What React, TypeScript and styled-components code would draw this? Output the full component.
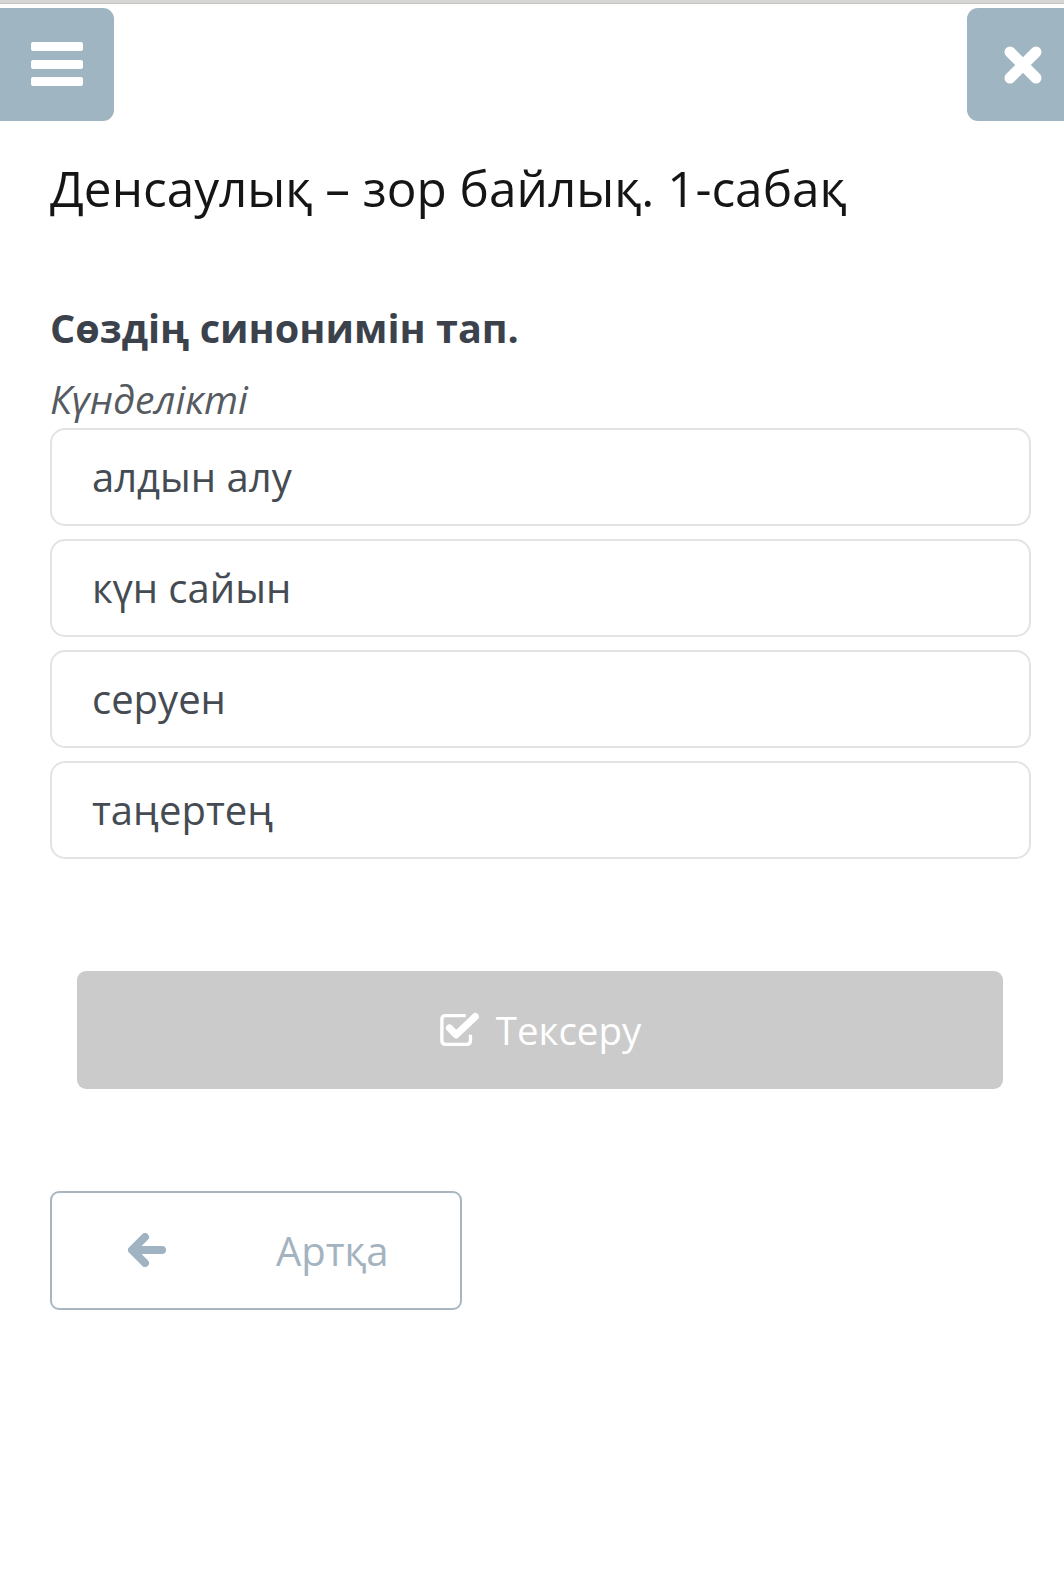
import React from "react";
import styled, { createGlobalStyle } from "styled-components";

const Global = createGlobalStyle`
  html, body { margin: 0; padding: 0; background: #ffffff; }
  body { font-family: "Open Sans", "Noto Sans", sans-serif; }
  * { box-sizing: border-box; }
`;

const Page = styled.div`
  width: 1064px;
  min-height: 1584px;
  background: #fff;
  border-top: 3px solid #d6d6d6;
  box-shadow: inset 0 1px 0 #c9c3bd;
`;

const TopBar = styled.div`
  display: flex;
  justify-content: space-between;
  padding-top: 5px;
`;

const SquareButton = styled.button<{ $side: "left" | "right"; $w: number; $shift?: number }>`
  width: ${(p) => p.$w}px;
  height: 113px;
  border: none;
  padding: 0 0 0 ${(p) => p.$shift ?? 0}px;
  background: #a0b5c2;
  display: flex;
  align-items: center;
  justify-content: center;
  border-radius: ${(p) => (p.$side === "left" ? "0 11px 11px 0" : "11px 0 0 11px")};
  cursor: pointer;
`;

const Content = styled.div`
  padding: 0 33px 0 50px;
  display: flex;
  flex-direction: column;
`;

const Title = styled.h1`
  margin: 38px 0 0 0;
  font-size: 49.5px;
  line-height: 1.2;
  font-weight: 400;
  color: #151515;
  white-space: nowrap;
`;

const Question = styled.h2`
  margin: 87px 0 0 0;
  font-size: 39.6px;
  line-height: 1.2;
  font-weight: 700;
  color: #3b424b;
`;

const Word = styled.div`
  margin-top: 23px;
  font-size: 39px;
  line-height: 1.2;
  font-style: italic;
  color: #555b61;
`;

const Options = styled.div`
  margin-top: 5px;
  display: flex;
  flex-direction: column;
  gap: 13px;
`;

const Option = styled.div`
  height: 98px;
  border: 2px solid #e3e3e3;
  border-radius: 15px;
  padding: 0 40px;
  display: flex;
  align-items: center;
  font-size: 40px;
  color: #454b52;
`;

const CheckRow = styled.div`
  margin-top: 112px;
  padding: 0 28px 0 27px;
`;

const CheckButton = styled.button`
  width: 100%;
  height: 118px;
  border: none;
  border-radius: 9px;
  background: #cbcbcb;
  color: #ffffff;
  font-family: "Open Sans", sans-serif;
  font-size: 38.5px;
  display: flex;
  align-items: center;
  justify-content: center;
  gap: 15px;
`;

const BackButton = styled.button`
  margin-top: 102px;
  width: 412px;
  height: 119px;
  border: 2px solid #a8b6c0;
  border-radius: 9px;
  background: #fff;
  color: #a3b3bf;
  font-family: "Open Sans", sans-serif;
  font-size: 40px;
  display: flex;
  align-items: center;
  padding: 0 0 0 76px;
  gap: 110px;
`;

const Bars = () => (
  <svg width="52" height="45" viewBox="0 0 52 45">
    <rect x="0" y="0" width="52" height="9" rx="2" fill="#fff" />
    <rect x="0" y="18" width="52" height="9" rx="2" fill="#fff" />
    <rect x="0" y="35" width="52" height="9" rx="2" fill="#fff" />
  </svg>
);

const Cross = () => (
  <svg width="38" height="38" viewBox="0 0 38 38">
    <path
      d="M6 6 L32 32 M32 6 L6 32"
      stroke="#fff"
      strokeWidth="11"
      strokeLinecap="round"
    />
  </svg>
);

const CheckIcon = () => (
  <svg width="42" height="36" viewBox="0 0 44 36">
    <path
      d="M28 3 H7 Q3 3 3 7 V29 Q3 33 7 33 H29 Q33 33 33 29 V23"
      fill="none"
      stroke="#fff"
      strokeWidth="3.5"
    />
    <path
      d="M11 16 L18 23 L38 4"
      fill="none"
      stroke="#fff"
      strokeWidth="7.5"
      strokeLinecap="round"
      strokeLinejoin="round"
    />
  </svg>
);

const ArrowLeft = () => (
  <svg width="38" height="34" viewBox="0 0 38 34">
    <path
      d="M17 4 L4 17 L17 30 M5 17 H34"
      fill="none"
      stroke="#9fb3c2"
      strokeWidth="8"
      strokeLinecap="round"
      strokeLinejoin="round"
    />
  </svg>
);

const options = ["алдын алу", "күн сайын", "серуен", "таңертең"];

export default function App() {
  return (
    <>
      <Global />
      <Page>
        <TopBar>
          <SquareButton $side="left" $w={114}>
            <Bars />
          </SquareButton>
          <SquareButton $side="right" $w={97} $shift={14}>
            <Cross />
          </SquareButton>
        </TopBar>
        <Content>
          <Title>Денсаулық – зор байлық. 1-сабақ</Title>
          <Question>Сөздің синонимін тап.</Question>
          <Word>Күнделікті</Word>
          <Options>
            {options.map((o) => (
              <Option key={o}>{o}</Option>
            ))}
          </Options>
          <CheckRow>
            <CheckButton>
              <CheckIcon />
              Тексеру
            </CheckButton>
          </CheckRow>
          <div>
            <BackButton>
              <ArrowLeft />
              Артқа
            </BackButton>
          </div>
        </Content>
      </Page>
    </>
  );
}
